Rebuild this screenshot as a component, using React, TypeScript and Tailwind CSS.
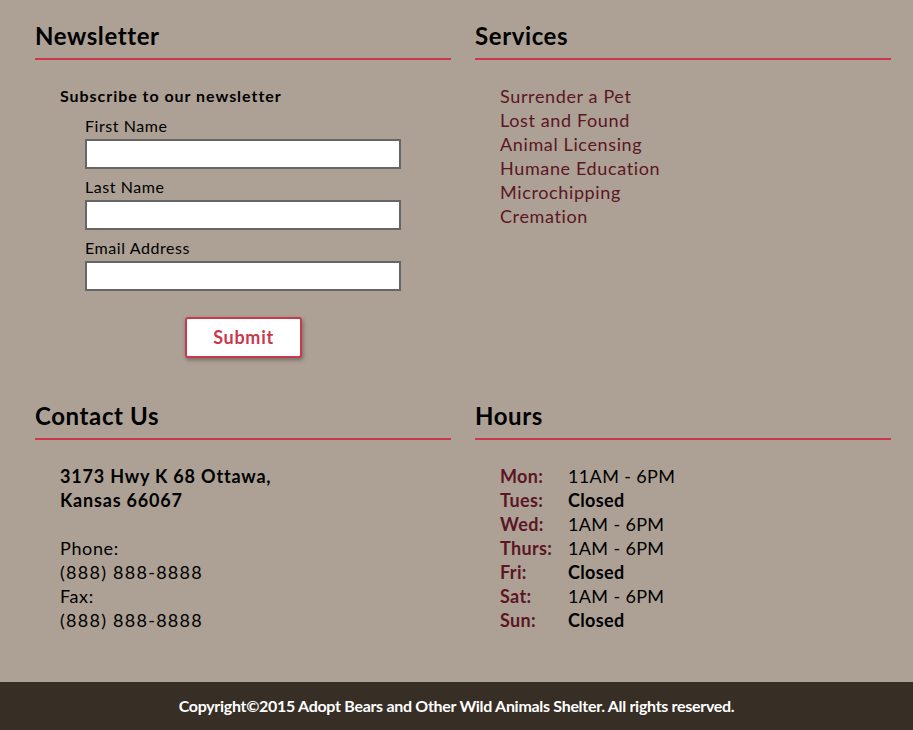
import React from "react";

const services = [
  "Surrender a Pet",
  "Lost and Found",
  "Animal Licensing",
  "Humane Education",
  "Microchipping",
  "Cremation",
];

const hours = [
  { day: "Mon:", time: "11AM - 6PM", closed: false },
  { day: "Tues:", time: "Closed", closed: true },
  { day: "Wed:", time: "1AM - 6PM", closed: false },
  { day: "Thurs:", time: "1AM - 6PM", closed: false },
  { day: "Fri:", time: "Closed", closed: true },
  { day: "Sat:", time: "1AM - 6PM", closed: false },
  { day: "Sun:", time: "Closed", closed: true },
];

const Heading = ({ children }: { children: React.ReactNode }) => (
  <h2 className="text-[24px] leading-[30px] font-bold text-black tracking-[0.025em] border-b-2 border-[#c9384b] pb-[7px]">
    {children}
  </h2>
);

const Field = ({ label }: { label: string }) => (
  <div className="mt-[6px] first:mt-0">
    <label className="block text-[16px] leading-[24px] text-black tracking-[0.035em]">
      {label}
    </label>
    <input
      type="text"
      className="mt-px block w-[316px] h-[30px] bg-white border-2 border-[#666666] outline-none"
    />
  </div>
);

const App = () => {
  return (
    <div
      className="min-h-[730px] bg-[#ada195] flex flex-col"
      style={{ fontFamily: "Lato, 'Open Sans', sans-serif" }}
    >
      <div className="flex-1 pl-[35px] pr-[22px] pt-[21px]">
        <div className="grid grid-cols-2 gap-x-[24px]">
          <section>
            <Heading>Newsletter</Heading>
            <div className="pl-[25px] pt-[24px]">
              <p className="text-[16px] leading-[24px] font-bold text-black tracking-[0.06em]">
                Subscribe to our newsletter
              </p>
              <form className="pl-[25px] mt-[6px]">
                <Field label="First Name" />
                <Field label="Last Name" />
                <Field label="Email Address" />
                <div className="mt-[26px] pl-[100px]">
                  <button
                    type="button"
                    className="w-[117px] h-[41px] bg-white border-2 border-[#c9384b] rounded-[3px] text-[#c9384b] text-[18px] font-bold tracking-[0.04em] shadow-[1px_2px_4px_rgba(0,0,0,0.35)]"
                  >
                    Submit
                  </button>
                </div>
              </form>
            </div>
          </section>

          <section>
            <Heading>Services</Heading>
            <ul className="pl-[25px] pt-[24px]">
              {services.map((s) => (
                <li
                  key={s}
                  className="text-[18px] leading-[24px] text-[#5b1624] tracking-[0.035em]"
                >
                  {s}
                </li>
              ))}
            </ul>
          </section>
        </div>

        <div className="grid grid-cols-2 gap-x-[24px] mt-[43px]">
          <section>
            <Heading>Contact Us</Heading>
            <div className="pl-[25px] pt-[24px] text-[18px] leading-[24px] text-black tracking-[0.035em]">
              <p className="font-bold tracking-[0.045em]">
                3173 Hwy K 68 Ottawa,
                <br />
                Kansas 66067
              </p>
              <p className="mt-[24px]">
                Phone:
                <br />
                <span className="tracking-[0.07em]">(888) 888-8888</span>
                <br />
                Fax:
                <br />
                <span className="tracking-[0.07em]">(888) 888-8888</span>
              </p>
            </div>
          </section>

          <section>
            <Heading>Hours</Heading>
            <div className="pl-[25px] pt-[24px] text-[18px] leading-[24px] tracking-[0.02em]">
              {hours.map((h) => (
                <div key={h.day} className="flex">
                  <span className="w-[68px] font-bold text-[#5b1624]">{h.day}</span>
                  <span className={h.closed ? "font-bold text-black" : "text-black"}>
                    {h.time}
                  </span>
                </div>
              ))}
            </div>
          </section>
        </div>
      </div>

      <footer className="h-[48px] bg-[#372e25] flex items-center justify-center">
        <p className="text-white text-[16px] font-bold tracking-[-0.3px]">
          Copyright©2015 Adopt Bears and Other Wild Animals Shelter. All rights reserved.
        </p>
      </footer>
    </div>
  );
};

export default App;
